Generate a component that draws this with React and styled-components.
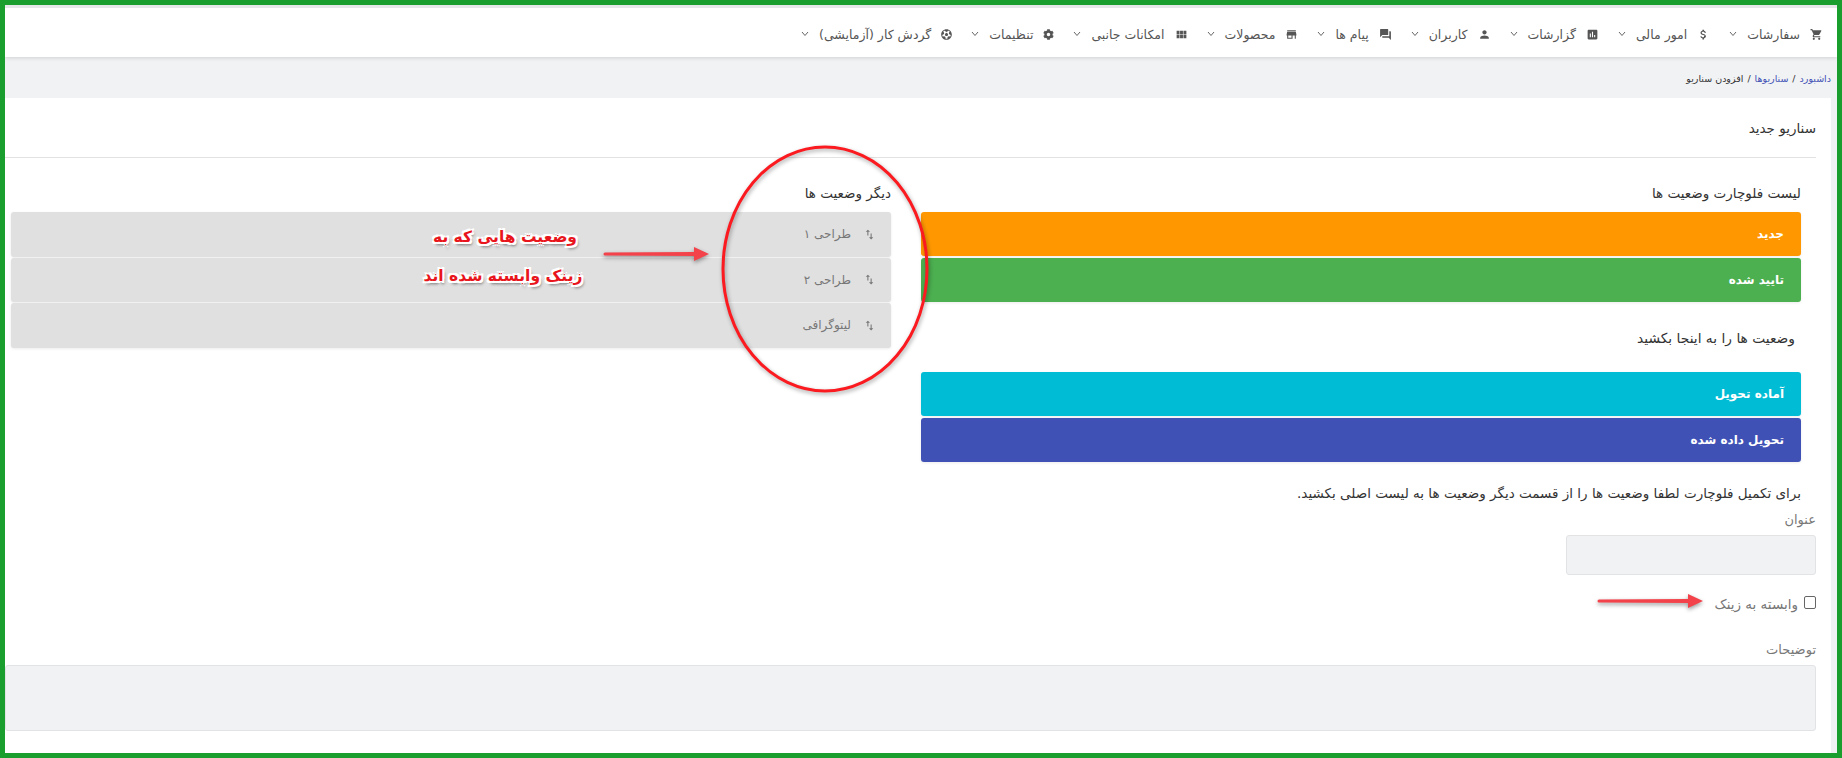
import styled, { createGlobalStyle } from "styled-components"
import { MdShoppingCart, MdAttachMoney, MdAssessment, MdPerson, MdForum, MdStore, MdViewModule, MdSwapVert } from "react-icons/md"
import { FaCog, FaFutbol } from "react-icons/fa"

const GlobalStyle = createGlobalStyle`
    html, body {
        margin:0;
        padding:0;
        background:#fff;
    }
    * {
        box-sizing:border-box;
    }
`

const Page = styled.div`
    position:relative;
    width:1842px;
    height:758px;
    overflow:hidden;
    border:5px solid #1a9e2e;
    background:#f1f2f4;
    direction:rtl;
    font-family:"DejaVu Sans", sans-serif;
    font-size:13.5px;
    color:#333;
`

const Navbar = styled.nav`
    display:flex;
    align-items:center;
    height:52px;
    padding:3px 14px 0 0;
    background:#fff;
    border-top:3px solid #e6e7e9;
    box-shadow:0 1px 4px rgba(0,0,0,0.14);
    position:relative;
    color:#555;
`

const NavItem = styled.div`
    display:flex;
    align-items:center;
    gap:10px;
    padding-left:19px;
    white-space:nowrap;
    font-size:12.5px;
`

const Chevron = styled.svg`
    width:8px;
    height:6px;
    fill:none;
    stroke:#666;
    stroke-width:1;
`

const Breadcrumb = styled.div`
    display:flex;
    align-items:center;
    gap:4px;
    height:41px;
    margin-right:6px;
    padding-top:2px;
    font-size:9.5px;
    white-space:nowrap;
`

const Crumb = styled.span`
    color:${p => p.$link ? "#3f51b5" : "#333"};
`

const Card = styled.div`
    height:655px;
    margin-right:6px;
    background:#fff;
`

const CardHeader = styled.div`
    display:flex;
    align-items:center;
    height:60px;
    margin-right:15px;
    border-bottom:1px solid #e2e2e2;
`

const Columns = styled.div`
    display:flex;
    gap:30px;
    padding:25px 30px 0 0;
`

const Column = styled.div`
    display:flex;
    flex-direction:column;
    width:880px;
`

const ColumnTitle = styled.div`
    height:20px;
    line-height:20px;
    margin-bottom:9px;
`

const DropHint = styled.div`
    height:20px;
    line-height:20px;
    margin:24px 6px 24px 0;
    font-size:13.8px;
`

const StatusBar = styled.div`
    display:flex;
    align-items:center;
    height:44px;
    margin-bottom:2px;
    padding:0 17px;
    border-radius:3px;
    background:${p => p.$color};
    color:#fff;
    font-weight:700;
    font-size:12px;
    box-shadow:0 1px 3px rgba(0,0,0,0.08);
`

const OtherBar = styled.div`
    display:flex;
    align-items:center;
    gap:12px;
    height:44.5px;
    margin-bottom:1px;
    padding:0 15px;
    border-radius:3px;
    background:#e0e0e0;
    color:#777;
    font-size:12px;
    box-shadow:0 1px 3px rgba(0,0,0,0.08);
`

const HelpText = styled.div`
    height:20px;
    line-height:20px;
    margin-top:19px;
    white-space:nowrap;
`

const Form = styled.div`
    display:flex;
    flex-direction:column;
    align-items:flex-start;
    padding:7px 15px 0 0;
    color:#777;
`

const FieldLabel = styled.label`
    display:block;
    height:20px;
    line-height:20px;
    margin-bottom:5px;
    font-size:13px;
`

const TextInput = styled.div`
    width:250px;
    height:40px;
    background:#f1f2f4;
    border:1px solid #e2e3e5;
    border-radius:3px;
`

const CheckRow = styled.label`
    display:flex;
    align-items:center;
    gap:6px;
    height:20px;
    margin:19px 0 26px;
`

const CheckBox = styled.span`
    display:block;
    width:12px;
    height:13px;
    margin-top:-4px;
    background:#fff;
    border:1px solid #666;
    border-radius:2px;
`

const TextArea = styled.div`
    width:100%;
    height:66px;
    background:#f1f2f4;
    border:1px solid #e2e3e5;
    border-radius:3px;
`

const Ring = styled.svg`
    position:absolute;
    left:718px;
    top:142px;
    width:214px;
    height:254px;
    overflow:visible;
    filter:drop-shadow(1px 2px 2px rgba(0,0,0,0.35));
`

const ArrowMark = styled.svg`
    position:absolute;
    left:${p => p.$x}px;
    top:${p => p.$y}px;
    width:106px;
    height:16px;
    overflow:visible;
    filter:drop-shadow(0 2px 2px rgba(0,0,0,0.4));
`

const Note = styled.div`
    position:absolute;
    top:${p => p.$y}px;
    left:${p => p.$x}px;
    width:160px;
    text-align:center;
    direction:rtl;
    font-family:"DejaVu Sans", sans-serif;
    font-weight:700;
    font-size:15.5px;
    line-height:20px;
    color:#e8161c;
    white-space:nowrap;
    text-shadow:1px 0 0 #fff, -1px 0 0 #fff, 0 1px 0 #fff, 0 -1px 0 #fff, 2px 2px 0 #fff, -2px -2px 0 #fff, 2px -2px 0 #fff, -2px 2px 0 #fff, 2px 3px 3px rgba(0,0,0,0.5);
`

const navItems = [
    ["سفارشات", MdShoppingCart],
    ["امور مالی", MdAttachMoney],
    ["گزارشات", MdAssessment],
    ["کاربران", MdPerson],
    ["پیام ها", MdForum],
    ["محصولات", MdStore],
    ["امکانات جانبی", MdViewModule],
    ["تنظیمات", FaCog],
    ["گردش کار (آزمایشی)", FaFutbol],
]

function Arrow({ x, y }) {
    return <ArrowMark $x={x} $y={y} viewBox="0 0 106 16">
        <path d="M2 6.5 L91 6 L91 1 L106 8 L91 15 L91 10 L2 9.5 A1.5 1.5 0 0 1 2 6.5 Z" fill="#f4424a" />
    </ArrowMark>
}

function App() {
    return <>
        <GlobalStyle />
        <Page>
            <Navbar>
                {navItems.map(([label, Icon]) => <NavItem key={label}>
                    <Icon size={label === "تنظیمات" || label.startsWith("گردش") ? 11 : 13} />
                    <span>{label}</span>
                    <Chevron viewBox="0 0 8 6"><polyline points="1,1 4,4.5 7,1" /></Chevron>
                </NavItem>)}
            </Navbar>
            <Breadcrumb>
                <Crumb $link>داشبورد</Crumb>
                <span>/</span>
                <Crumb $link>سناریوها</Crumb>
                <span>/</span>
                <Crumb>افزودن سناریو</Crumb>
            </Breadcrumb>
            <Card>
                <CardHeader>سناریو جدید</CardHeader>
                <Columns>
                    <Column>
                        <ColumnTitle>لیست فلوچارت وضعیت ها</ColumnTitle>
                        <StatusBar $color="#ff9800">جدید</StatusBar>
                        <StatusBar $color="#4caf50">تایید شده</StatusBar>
                        <DropHint>وضعیت ها را به اینجا بکشید</DropHint>
                        <StatusBar $color="#00bcd4">آماده تحویل</StatusBar>
                        <StatusBar $color="#3f51b5">تحویل داده شده</StatusBar>
                        <HelpText>برای تکمیل فلوچارت لطفا وضعیت ها را از قسمت دیگر وضعیت ها به لیست اصلی بکشید.</HelpText>
                    </Column>
                    <Column>
                        <ColumnTitle>دیگر وضعیت ها</ColumnTitle>
                        <OtherBar><MdSwapVert size={13} />طراحی ۱</OtherBar>
                        <OtherBar><MdSwapVert size={13} />طراحی ۲</OtherBar>
                        <OtherBar><MdSwapVert size={13} />لیتوگرافی</OtherBar>
                    </Column>
                </Columns>
                <Form>
                    <FieldLabel>عنوان</FieldLabel>
                    <TextInput />
                    <CheckRow><CheckBox />وابسته به زینک</CheckRow>
                    <FieldLabel>توضیحات</FieldLabel>
                    <TextArea />
                </Form>
            </Card>
        </Page>
        <Ring viewBox="0 0 214 254">
            <ellipse cx="107" cy="127" rx="102" ry="122" fill="none" stroke="#fb1a1f" strokeWidth="3" />
        </Ring>
        <Arrow x={603} y={246} />
        <Arrow x={1597} y={593} />
        <Note $x={425} $y={227}>وضعیت هایی که به</Note>
        <Note $x={423} $y={266}>زینک وابسته شده اند</Note>
    </>
}

export default App
